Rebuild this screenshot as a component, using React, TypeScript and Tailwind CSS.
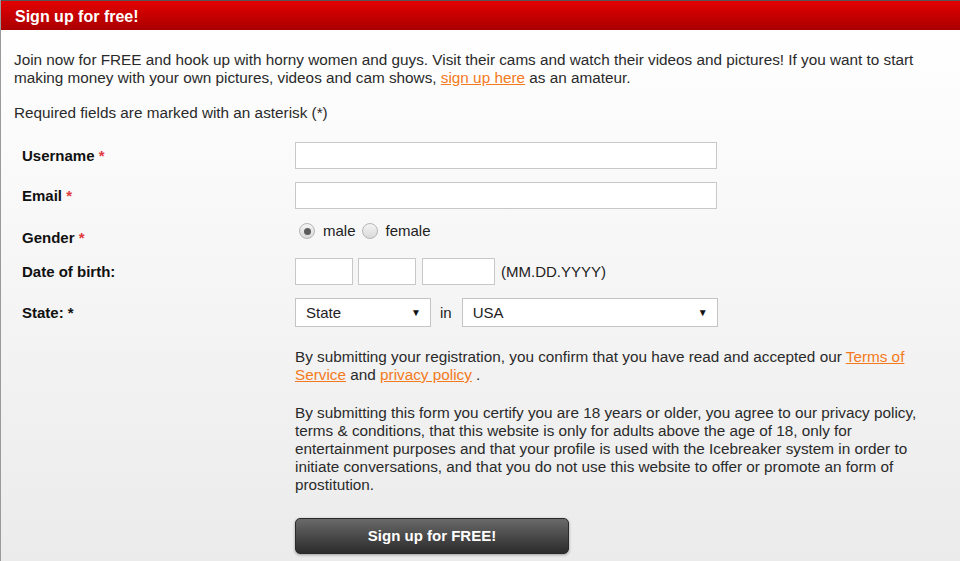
const font = { fontFamily: '"Liberation Sans", Arial, sans-serif' };

function Field({ className = "" }: { className?: string }) {
  return <div className={`h-[27px] border border-[#c8c8c8] bg-white ${className}`} />;
}

function Dropdown({ label, className = "" }: { label: string; className?: string }) {
  return (
    <div className={`flex h-[29px] items-center justify-between border border-[#c4c4c4] bg-white pl-[10px] pr-[9px] text-[15px] text-[#222] ${className}`}>
      <span>{label}</span>
      <span className="text-[10px] text-[#111]">▼</span>
    </div>
  );
}

function Radio({ checked }: { checked?: boolean }) {
  return (
    <span className="flex h-[16px] w-[16px] items-center justify-center rounded-full border border-[#b5b5b5] bg-gradient-to-b from-[#f4f4f4] to-[#d9d9d9]">
      {checked && <span className="h-[7px] w-[7px] rounded-full bg-[#5c5c5c]" />}
    </span>
  );
}

function Label({ text, star, redStar = true, className = "" }: { text: string; star?: boolean; redStar?: boolean; className?: string }) {
  return (
    <div className={`w-[281px] pl-[8px] text-[15px] font-bold text-[#111] ${className}`}>
      {text}
      {star && <span className={redStar ? "text-[#e03a3a]" : "text-[#111]"}> *</span>}
    </div>
  );
}

export default function App() {
  return (
    <div className="flex h-[561px] w-[960px] flex-col overflow-hidden border-l border-[#9a9a9a] bg-white" style={font}>
      <div className="h-[30px] shrink-0 border-t border-[#555] bg-gradient-to-b from-[#e40000] to-[#a90000] pl-[14px] pt-[4px] text-[16px] font-bold text-white">
        Sign up for free!
      </div>
      <div className="flex-1 bg-gradient-to-b from-white to-[#ebebeb] px-[13px] pt-[21px] text-[15.3px] leading-[18px] text-[#2a2a2a]">
        <p className="w-[925px]">
          Join now for FREE and hook up with horny women and guys. Visit their cams and watch their videos and pictures! If you want to start making money with your own pictures, videos and cam shows,{" "}
          <a className="text-[#f47a20] underline">sign up here</a> as an amateur.
        </p>
        <p className="mt-[17px]">Required fields are marked with an asterisk (*)</p>

        <div className="mt-[20px] flex flex-col gap-[13px]">
          <div className="flex items-center">
            <Label text="Username" star />
            <Field className="w-[422px]" />
          </div>
          <div className="flex items-center">
            <Label text="Email" star />
            <Field className="w-[422px]" />
          </div>
          <div className="flex h-[23px] items-start">
            <Label text="Gender" star className="self-end leading-[14px]" />
            <div className="flex items-center text-[15px] text-[#222]">
              <span className="ml-[4px]"><Radio checked /></span>
              <span className="ml-[8px]">male</span>
              <span className="ml-[6px]"><Radio /></span>
              <span className="ml-[8px]">female</span>
            </div>
          </div>
          <div className="flex items-center">
            <Label text="Date of birth:" />
            <Field className="w-[58px]" />
            <Field className="ml-[5px] w-[58px]" />
            <Field className="ml-[6px] w-[73px]" />
            <span className="ml-[6px] text-[15px] text-[#222]">(MM.DD.YYYY)</span>
          </div>
          <div className="flex items-center">
            <Label text="State:" star redStar={false} />
            <Dropdown label="State" className="w-[136px]" />
            <span className="ml-[9px] mr-[10px] text-[15px] text-[#222]">in</span>
            <Dropdown label="USA" className="w-[256px]" />
          </div>
        </div>

        <div className="ml-[281px] mt-[21px] w-[628px]">
          <p>
            By submitting your registration, you confirm that you have read and accepted our{" "}
            <a className="text-[#f47a20] underline">Terms of Service</a> and{" "}
            <a className="text-[#f47a20] underline">privacy policy</a> .
          </p>
          <p className="mt-[20px]">
            By submitting this form you certify you are 18 years or older, you agree to our privacy policy, terms &amp; conditions, that this website is only for adults above the age of 18, only for entertainment purposes and that your profile is used with the Icebreaker system in order to initiate conversations, and that you do not use this website to offer or promote an form of prostitution.
          </p>
          <button
            type="button"
            className="mt-[24px] flex h-[36px] w-[274px] items-center justify-center rounded-[5px] border border-[#2a2a2a] bg-gradient-to-b from-[#6a6a6a] to-[#2c2c2c] text-[15px] font-bold text-white shadow-[0_1px_3px_rgba(0,0,0,0.35)]"
          >
            Sign up for FREE!
          </button>
        </div>
      </div>
    </div>
  );
}
